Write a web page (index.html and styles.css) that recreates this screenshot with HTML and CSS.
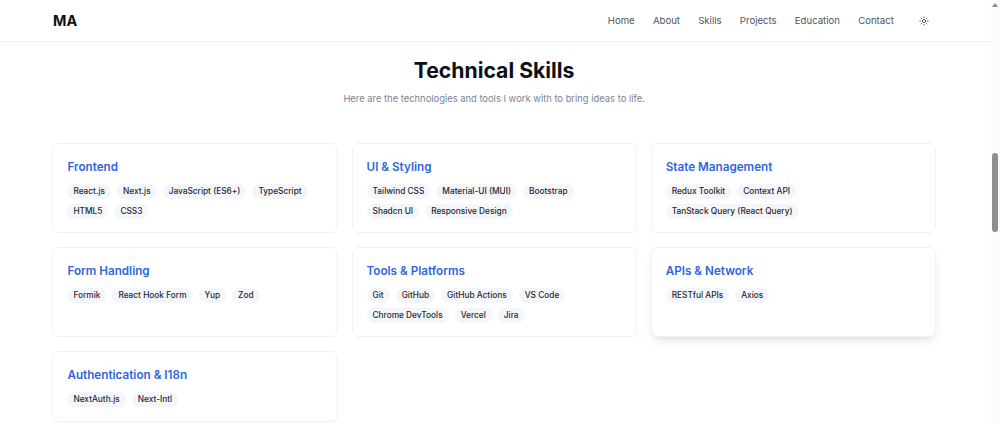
FILE: index.html
```html
<!DOCTYPE html>
<html lang="en">
<head>
<meta charset="utf-8">
<title>Technical Skills</title>
<link rel="stylesheet" href="styles.css">
</head>
<body>
<div class="page">
  <header class="nav">
    <div class="logo">MA</div>
    <nav class="links">
      <a>Home</a><a>About</a><a>Skills</a><a>Projects</a><a>Education</a><a>Contact</a>
      <svg class="sun" viewBox="0 0 24 24" width="10" height="10" fill="none" stroke="#374151" stroke-width="2" stroke-linecap="round"><circle cx="12" cy="12" r="4"/><path d="M12 2v2M12 20v2M4.93 4.93l1.41 1.41M17.66 17.66l1.41 1.41M2 12h2M20 12h2M6.34 17.66l-1.41 1.41M19.07 4.93l-1.41 1.41"/></svg>
    </nav>
  </header>
  <main class="main">
    <h1>Technical Skills</h1>
    <p class="sub">Here are the technologies and tools I work with to bring ideas to life.</p>
    <section class="grid">
      <article class="card"><h2>Frontend</h2><div class="tags"><span>React.js</span><span>Next.js</span><span>JavaScript (ES6+)</span><span>TypeScript</span><span>HTML5</span><span>CSS3</span></div></article>
      <article class="card"><h2>UI &amp; Styling</h2><div class="tags"><span>Tailwind CSS</span><span>Material-UI (MUI)</span><span>Bootstrap</span><span>Shadcn UI</span><span>Responsive Design</span></div></article>
      <article class="card"><h2>State Management</h2><div class="tags"><span>Redux Toolkit</span><span>Context API</span><span>TanStack Query (React Query)</span></div></article>
      <article class="card"><h2>Form Handling</h2><div class="tags"><span>Formik</span><span>React Hook Form</span><span>Yup</span><span>Zod</span></div></article>
      <article class="card"><h2>Tools &amp; Platforms</h2><div class="tags"><span>Git</span><span>GitHub</span><span>GitHub Actions</span><span>VS Code</span><span>Chrome DevTools</span><span>Vercel</span><span>Jira</span></div></article>
      <article class="card hover"><h2>APIs &amp; Network</h2><div class="tags"><span>RESTful APIs</span><span>Axios</span></div></article>
      <article class="card"><h2>Authentication &amp; I18n</h2><div class="tags"><span>NextAuth.js</span><span>Next-Intl</span></div></article>
    </section>
  </main>
</div>
<div class="scrollbar"><div class="arrow"></div><div class="thumb"></div></div>
</body>
</html>
```
FILE: styles.css
```css
* { box-sizing: border-box; }
html, body { margin: 0; height: 100%; overflow: hidden; background: #fff; }
body { font-family: Inter, "Liberation Sans", sans-serif; color: #111827; }
.page { width: 991px; }
.nav { height: 42px; padding: 0 62.5px 0 53px; display: flex; align-items: center; justify-content: space-between; border-bottom: 1px solid #f0f1f3; }
.logo { font-size: 14.4px; font-weight: 700; color: #0b0f19; }
.links { display: flex; align-items: center; gap: 18.2px; font-size: 9.6px; color: #4b5563; }
.sun { margin-left: 6.5px; }
.main { padding: 0 55.2px 0 52.4px; }
h1 { margin: 14px 0 0; font-size: 21.2px; line-height: 28px; font-weight: 700; text-align: center; color: #0b0f19; }
.sub { margin: 8px 0 0; font-size: 9.4px; line-height: 14px; text-align: center; color: #7b8391; }
.grid { margin-top: 37px; display: grid; grid-template-columns: repeat(3, 1fr); gap: 14px; }
.card { height: 90px; padding: 15px 14px 14px; border: 1px solid #f1f2f4; border-radius: 6px; background: #fff; }
.card:last-child { height: 71px; }
.hover { box-shadow: 0 6px 12px -3px rgba(0,0,0,.1), 0 3px 5px -3px rgba(0,0,0,.08); }
h2 { margin: 0; font-size: 11.7px; line-height: 17px; font-weight: 600; color: #2f66dc; }
.tags { margin-top: 8px; display: flex; flex-wrap: wrap; gap: 5px 6px; }
.tags span { padding: 0 6px; height: 15px; line-height: 15px; font-size: 8.3px; font-weight: 500; color: #1f2937; background: #f5f6fa; border-radius: 8px; }
.scrollbar { position: absolute; top: 0; right: 0; width: 9px; height: 100%; background: #fcfcfc; }
.arrow { position: absolute; top: 3px; left: 1px; border: 3px solid transparent; border-top: 0; border-bottom: 4px solid #8f8f8f; }
.thumb { position: absolute; top: 153px; left: 1px; width: 6px; height: 79px; border-radius: 3px; background: #8f8f8f; }
```
